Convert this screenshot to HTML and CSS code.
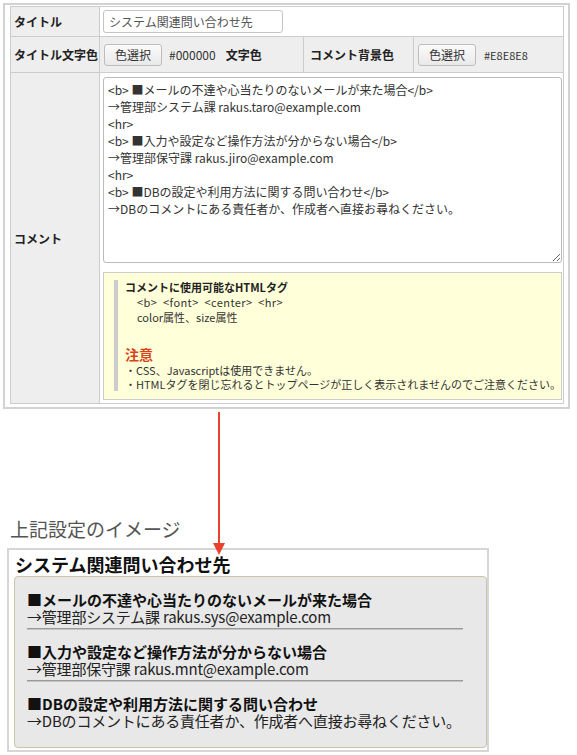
FILE: index.html
```html
<!DOCTYPE html>
<html lang="ja">
<head>
<meta charset="utf-8">
<title>コメント設定</title>
<link rel="stylesheet" href="styles.css">
</head>
<body>
<div class="page">
  <div class="form-wrap">
    <table class="form">
      <colgroup>
        <col class="c1"><col class="c2"><col class="c3"><col class="c4">
      </colgroup>
      <tr class="r1">
        <th class="label">タイトル</th>
        <td class="val" colspan="3"><input class="title-input" type="text" value="システム関連問い合わせ先"></td>
      </tr>
      <tr class="r2">
        <th class="label">タイトル文字色</th>
        <td class="val gray"><button class="pick">色選択</button><span class="code">#000000</span><b class="inline-label">文字色</b></td>
        <th class="label label-b">コメント背景色</th>
        <td class="val gray"><button class="pick">色選択</button><span class="code small">#E8E8E8</span></td>
      </tr>
      <tr class="r3">
        <th class="label">コメント</th>
        <td class="val comment-cell" colspan="3">
<textarea class="comment">&lt;b&gt; ■メールの不達や心当たりのないメールが来た場合&lt;/b&gt;
→管理部システム課 rakus.taro@example.com
&lt;hr&gt;
&lt;b&gt; ■入力や設定など操作方法が分からない場合&lt;/b&gt;
→管理部保守課 rakus.jiro@example.com
&lt;hr&gt;
&lt;b&gt; ■DBの設定や利用方法に関する問い合わせ&lt;/b&gt;
→DBのコメントにある責任者か、作成者へ直接お尋ねください。</textarea>
          <div class="hint">
            <div class="hint-inner">
              <div class="hint-title">コメントに使用可能なHTMLタグ</div>
              <div class="hint-sub tags">&lt;b&gt; &lt;font&gt; &lt;center&gt; &lt;hr&gt;</div>
              <div class="hint-sub">color属性、size属性</div>
              <div class="note">注意</div>
              <div class="note-line">・CSS、Javascriptは使用できません。</div>
              <div class="note-line">・HTMLタグを閉じ忘れるとトップページが正しく表示されませんのでご注意ください。</div>
            </div>
          </div>
        </td>
      </tr>
    </table>
  </div>

  <div class="caption">上記設定のイメージ</div>

  <div class="preview">
    <div class="preview-title">システム関連問い合わせ先</div>
    <div class="preview-box">
      <div class="item-title">■メールの不達や心当たりのないメールが来た場合</div>
      <div class="item-line">→管理部システム課 rakus.sys@example.com</div>
      <div class="rule"></div>
      <div class="item-title">■入力や設定など操作方法が分からない場合</div>
      <div class="item-line">→管理部保守課 rakus.mnt@example.com</div>
      <div class="rule"></div>
      <div class="item-title">■DBの設定や利用方法に関する問い合わせ</div>
      <div class="item-line">→DBのコメントにある責任者か、作成者へ直接お尋ねください。</div>
    </div>
  </div>

  <svg class="arrow" width="14" height="144" viewBox="0 0 14 144">
    <line x1="7" y1="0" x2="7" y2="132" stroke="#e8412c" stroke-width="2"/>
    <polygon points="1,131 13,131 7,143" fill="#e8412c"/>
  </svg>
</div>
</body>
</html>
```
FILE: styles.css
```css
* { box-sizing: border-box; }
html, body {
  margin: 0;
  padding: 0;
  background: #fff;
}
body {
  font-family: "Noto Sans CJK JP", "Noto Sans", sans-serif;
  color: #222;
}
.page {
  position: relative;
  width: 577px;
  height: 755px;
}
.form-wrap {
  margin: 3px 0 0 3px;
  width: 567px;
  border: 2px solid #d2d2d2;
  padding: 1px 5px 3px 5px;
}
.form {
  border-collapse: collapse;
  table-layout: fixed;
  width: 553px;
}
.c1 { width: 89px; }
.c2 { width: 204px; }
.c3 { width: 110px; }
.c4 { width: 150px; }
.form th, .form td {
  border: 1px solid #cccccc;
}
.label {
  background: #eeeeee;
  text-align: left;
  font-size: 12px;
  font-weight: bold;
  color: #222;
  padding: 0 3px;
  white-space: nowrap;
}
.label-b { padding-left: 6px; }
.val {
  background: #fff;
  padding: 0 0 0 3px;
  font-size: 12px;
  white-space: nowrap;
}
.val.gray { background: #eeeeee; }
.r1 { height: 30px; }
.r2 { height: 36px; }
.title-input {
  display: block;
  width: 180px;
  height: 23px;
  border: 1px solid #c4c4c4;
  border-radius: 3px;
  padding: 0 5px;
  font-family: inherit;
  font-size: 12px;
  color: #555;
  background: #fff;
  outline: none;
}
.pick {
  display: inline-block;
  vertical-align: middle;
  height: 22px;
  padding: 0 10px;
  margin-left: 1px;
  border: 1px solid #bdbdbd;
  border-radius: 3px;
  background: linear-gradient(#fbfbfb, #e9e9e9);
  font-family: inherit;
  font-size: 12px;
  color: #333;
  line-height: 20px;
}
.code {
  display: inline-block;
  vertical-align: middle;
  margin-left: 7px;
  font-size: 12px;
  color: #333;
}
.code.small { font-size: 11px; margin-left: 8px; }
.inline-label {
  display: inline-block;
  vertical-align: middle;
  margin-left: 10px;
  font-size: 12px;
  color: #222;
}
.comment-cell {
  padding: 4px 0 3px 3px;
  vertical-align: top;
}
.comment {
  display: block;
  width: 459px;
  height: 186px;
  margin: 0;
  border: 1px solid #bbbbbb;
  border-radius: 3px;
  padding: 3px 4px;
  font-family: inherit;
  font-size: 12px;
  line-height: 17px;
  color: #333;
  background: #fff;
  resize: both;
  white-space: pre;
  overflow: hidden;
}
.hint {
  margin-top: 9px;
  width: 459px;
  background: #ffffd9;
  border: 1px solid #cccccc;
  padding: 7px 10px 8px 10px;
  white-space: nowrap;
}
.hint-inner {
  border-left: 4px solid #cccccc;
  padding-left: 7px;
  font-size: 11px;
  line-height: 15px;
  color: #333;
}
.hint-title { font-weight: bold; color: #222; }
.hint-sub { padding-left: 12px; }
.tags { word-spacing: 3px; letter-spacing: 0.4px; }
.note {
  margin-top: 20px;
  font-size: 14px;
  font-weight: bold;
  line-height: 18px;
  color: #d8431a;
}
.note-line { line-height: 14px; }
.caption {
  margin: 108px 0 0 10px;
  font-size: 19px;
  line-height: 24px;
  color: #555;
}
.preview {
  margin: 7px 0 0 7px;
  width: 482px;
  border: 2px solid #d6d6d6;
  padding: 2px 1px 2px 5px;
}
.preview-title {
  font-size: 18px;
  font-weight: bold;
  line-height: 24px;
  color: #111;
  padding-left: 1px;
}
.preview-box {
  width: 473px;
  background: #e8e8e8;
  border: 1px solid #cac3a6;
  border-radius: 4px;
  padding: 14px 10px 18px 12px;
  font-size: 15px;
  line-height: 17px;
  color: #222;
  white-space: nowrap;
}
.item-title { font-weight: bold; color: #111; }
.item-line { color: #222; letter-spacing: -0.2px; }
.rule {
  width: 436px;
  margin: 3px 0 13px 0;
  border-top: 1px solid #9a9a9a;
  border-bottom: 1px solid #c4c4c4;
}
.arrow {
  position: absolute;
  left: 212px;
  top: 409px;
}
```
